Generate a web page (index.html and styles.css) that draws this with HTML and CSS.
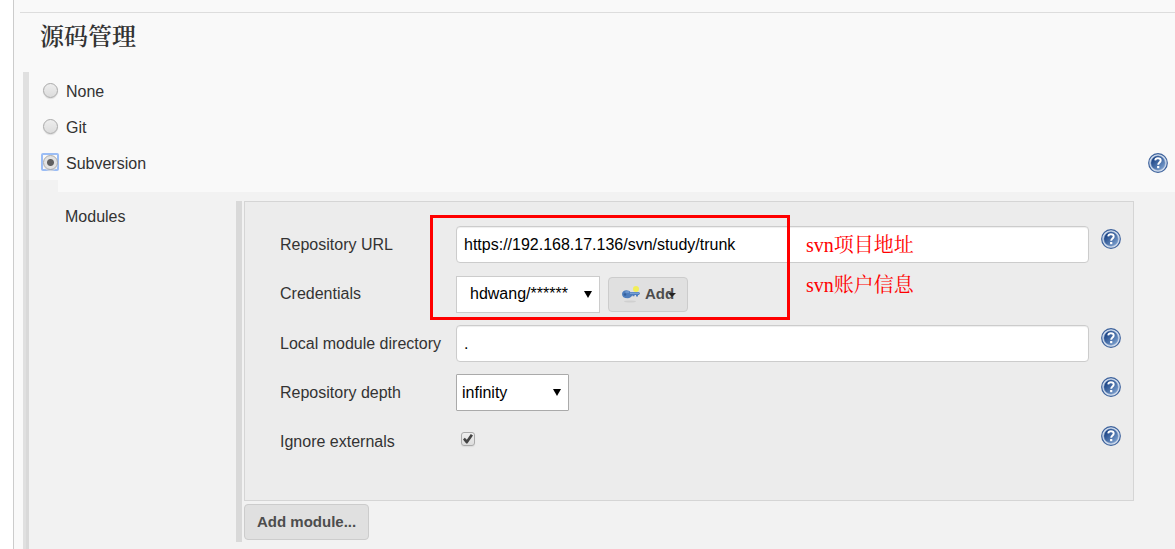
FILE: index.html
```html
<!DOCTYPE html>
<html lang="zh-CN">
<head>
<meta charset="UTF-8">
<meta name="viewport" content="width=device-width, initial-scale=1">
<title>源码管理</title>
<link rel="stylesheet" href="styles.css">
</head>
<body>

<!-- shared icons -->
<svg class="defs" width="0" height="0" aria-hidden="true">
  <defs>
    <linearGradient id="helpFill" x1="0" y1="0" x2="1" y2="1">
      <stop offset="0.2" stop-color="#1f4788"/>
      <stop offset="1" stop-color="#88acd8"/>
    </linearGradient>
    <symbol id="help" viewBox="0 0 20 20">
      <circle cx="10" cy="10" r="9.3" fill="#d3deee" stroke="#3d629c" stroke-width="1.2"/>
      <circle cx="10" cy="10" r="7.2" fill="url(#helpFill)" stroke="#7f9cc6" stroke-width="0.5"/>
      <path d="M7.2 7.4C7.4 5.9 8.5 5.3 9.9 5.3c1.700 0 2.800 0.800 2.800 2.200 0 2-2.500 2.100-2.500 4.300" fill="none" stroke="#fff" stroke-width="1.900"/>
      <rect x="9.100" y="13" width="2.200" height="2.200" fill="#fff"/>
    </symbol>
  </defs>
</svg>

<main class="panel">
  <hr class="divider">
  <h1>源码管理</h1>

  <section class="scm">
    <div class="option">
      <span class="radio"><input type="radio" name="scm" id="scmNone"></span>
      <label for="scmNone">None</label>
    </div>
    <div class="option">
      <span class="radio"><input type="radio" name="scm" id="scmGit"></span>
      <label for="scmGit">Git</label>
    </div>
    <div class="option">
      <span class="radio"><input type="radio" name="scm" id="scmSvn" checked></span>
      <label for="scmSvn">Subversion</label>
      <button type="button" class="help" aria-label="Help for Subversion"><svg><use href="#help"/></svg></button>
    </div>

    <div class="nested">
      <div class="nested-tab"></div>
      <div class="nested-body">
        <div class="nested-label">Modules</div>
        <div class="modules">
          <div class="module">
            <div class="row">
              <label for="url">Repository URL</label>
              <input type="text" id="url" value="https://192.168.17.136/svn/study/trunk">
              <button type="button" class="help" aria-label="Help for Repository URL"><svg><use href="#help"/></svg></button>
            </div>
            <div class="row row-credentials">
              <label for="credentials">Credentials</label>
              <div class="controls">
                <span class="select credentials">
                  <select id="credentials"><option>hdwang/******</option></select>
                </span>
                <button type="button" class="btn btn-add">
                  <svg class="key" viewBox="0 0 20 18" aria-hidden="true">
                    <ellipse cx="9" cy="16.500" rx="6" ry="0.900" fill="#d0d0d0"/>
                    <circle cx="15" cy="4" r="3" fill="#f2ee58"/>
                    <path d="M1 9C1 6.500 3 5.200 5.400 5.200c2 0 3.300.700 4 1.900H18l1 1.200-1 1.800h-1v1.300h-2v-1.300h-1.500v1.200h-2v-1.200c-.8 1.800-2.600 3.200-4.800 3.200C3 13.300 1 11.800 1 9z" fill="#4d7dbd"/>
                    <path d="M4.500 7H8M9 8.200h9" stroke="#8bb0df" fill="none"/>
                    <circle cx="4" cy="9.500" r="1.300" fill="#34609c"/>
                  </svg>
                  <span>Add</span>
                </button>
              </div>
            </div>
            <div class="row">
              <label for="local">Local module directory</label>
              <input type="text" id="local" value=".">
              <button type="button" class="help" aria-label="Help for Local module directory"><svg><use href="#help"/></svg></button>
            </div>
            <div class="row">
              <label for="depth">Repository depth</label>
              <div class="controls">
                <span class="select depth">
                  <select id="depth"><option>infinity</option></select>
                </span>
              </div>
              <button type="button" class="help" aria-label="Help for Repository depth"><svg><use href="#help"/></svg></button>
            </div>
            <div class="row">
              <label for="externals">Ignore externals</label>
              <div class="controls">
                <input type="checkbox" id="externals" checked>
              </div>
              <button type="button" class="help" aria-label="Help for Ignore externals"><svg><use href="#help"/></svg></button>
            </div>

            <!-- red notes over the form -->
            <div class="mark"></div>
            <div class="notes">
              <p>svn项目地址</p>
              <p>svn账户信息</p>
            </div>
          </div>
          <button type="button" class="btn btn-module">Add module...</button>
        </div>
      </div>
    </div>
  </section>
</main>

</body>
</html>
```
FILE: styles.css
```css
* {
  box-sizing: border-box;
}
body {
  margin: 0;
  background: #fff;
  color: #333;
  font-family: "Liberation Sans", Arial, "Noto Sans CJK SC", sans-serif;
  font-size: 16px;
  line-height: 20px;
}
button,
input,
select {
  margin: 0;
  font: inherit;
}
.defs {
  position: absolute;
}

/* PANEL */
.panel {
  min-height: 100vh;
  margin-left: 13px;
  padding-top: 12px;
  border-left: 1px solid #ccc;
  background: #f9f9f9;
}
.divider {
  margin: 0 0 0 6px;
  border: 0;
  border-top: 1px solid #ddd;
}
h1 {
  margin: 0;
  padding: 8px 0 19px 26px;
  font-family: "Liberation Serif", "Noto Serif CJK SC", "Noto Sans CJK SC", serif;
  font-size: 24px;
  line-height: 32px;
  font-weight: 600;
}

/* RADIO OPTIONS */
.scm {
  margin-left: 9px;
  border-left: 6px solid #e0e0e0;
}
.option {
  display: flex;
  align-items: center;
  height: 36px;
  padding: 2px 7px 0 12px;
}
.option label {
  margin: 2px 0 0 7px;
}
.option .help {
  margin-left: auto;
}
.radio {
  display: grid;
  place-items: center;
  width: 18px;
  height: 18px;
  margin-bottom: 2px;
  border: 2px solid transparent;
  border-radius: 2px;
}
.radio:has(:checked) {
  border-color: #9bbdf5;
}
input[type="radio"] {
  appearance: none;
  width: 15px;
  height: 15px;
  border: 1px solid #aaa;
  border-radius: 50%;
  background: linear-gradient(#eee, #dcdcdc);
  box-shadow: 0 1px 1px #ddd;
}
input[type="radio"]:checked {
  background: radial-gradient(circle, #606060 3px, #e2e2e2 4px);
}

.help {
  width: 20px;
  height: 20px;
  padding: 0;
  border: 0;
  background: none;
  cursor: pointer;
}
.help svg {
  display: block;
  width: 20px;
  height: 20px;
}

/* NESTED BLOCK */
.nested {
  margin-left: -3px;
}
.nested-tab {
  width: 32px;
  height: 12px;
  border-left: 3px solid #d9d9d9;
  background: #f2f2f2;
}
.nested-body {
  display: flex;
  padding: 9px 41px 7px 36px;
  border-left: 3px solid #d9d9d9;
  background: #f2f2f2;
}
.nested-label {
  flex: 0 0 171px;
  padding-top: 6px;
}
.modules {
  flex: 1;
  padding: 0 0 2px 2px;
  border-left: 6px solid #d9d9d9;
}
.module {
  position: relative;
  margin-bottom: 3px;
  padding: 18px 12px 34px 35px;
  border: 1px solid #d5d5d5;
  background: #ececec;
}

/* FORM ROWS */
.row {
  display: grid;
  grid-template-columns: 176px 1fr 32px;
  align-items: center;
  height: 49px;
}
.row-credentials {
  height: 50px;
}
.row .help {
  align-self: start;
  justify-self: end;
  margin-top: 9px;
}
.controls {
  display: flex;
  align-items: center;
  gap: 8px;
}
input[type="text"] {
  width: 100%;
  height: 37px;
  padding: 0 7px;
  border: 1px solid #ccc;
  border-radius: 4px;
  background: #fff;
  color: #000;
  box-shadow: inset 0 1px 1px #eee;
}
.select {
  position: relative;
}
.select::after {
  content: "";
  position: absolute;
  top: 15px;
  right: 8px;
  border: 4px solid transparent;
  border-top: 7px solid #000;
  border-bottom: 0;
  pointer-events: none;
}
select {
  appearance: none;
  display: block;
  width: 100%;
  height: 37px;
  padding: 0 5px;
  border: 1px solid #aaa;
  border-radius: 1px;
  background: #fff;
  color: #000;
}
.credentials {
  width: 144px;
}
.credentials select {
  padding-left: 13px;
  border-color: #ccc;
  border-radius: 0;
}
.depth {
  width: 113px;
}
input[type="checkbox"] {
  appearance: none;
  display: grid;
  place-items: center;
  width: 14px;
  height: 14px;
  margin: 0 0 5px 5px;
  border: 1px solid #aaa;
  border-radius: 3px;
  background: linear-gradient(#eee, #ddd);
  box-shadow: 0 1px 1px #ddd;
}
input[type="checkbox"]::before {
  content: "";
  width: 10px;
  height: 10px;
  background: #444;
  clip-path: polygon(0 55%, 18% 38%, 38% 58%, 78% 0, 100% 16%, 44% 96%, 32% 96%);
}

/* BUTTONS */
.btn {
  border: 1px solid #ccc;
  border-radius: 4px;
  background: #e0e0e0;
  color: #4d4d4d;
  font-size: 15px;
  font-weight: 700;
  cursor: pointer;
}
.btn-add {
  position: relative;
  display: flex;
  align-items: center;
  height: 35px;
  padding: 0 13px 0 12px;
}
.btn-add .key {
  width: 20px;
  height: 18px;
  margin-right: 4px;
}
.btn-add::after {
  content: "";
  position: absolute;
  top: 15px;
  right: 11px;
  border: 4px solid transparent;
  border-top-color: #222;
  border-bottom: 0;
}
.btn-module {
  display: block;
  height: 36px;
  padding: 0 12px;
}

/* RED NOTES */
.mark {
  position: absolute;
  top: 13px;
  left: 185px;
  width: 360px;
  height: 105px;
  border: 3px solid #f00;
  pointer-events: none;
}
.notes {
  position: absolute;
  top: 23px;
  left: 561px;
  color: #f00;
  font-family: "Liberation Serif", "Noto Serif CJK SC", "Noto Sans CJK SC", serif;
  font-size: 20px;
  font-weight: 400;
  line-height: 40px;
  pointer-events: none;
}
.notes p {
  margin: 0;
}
```
